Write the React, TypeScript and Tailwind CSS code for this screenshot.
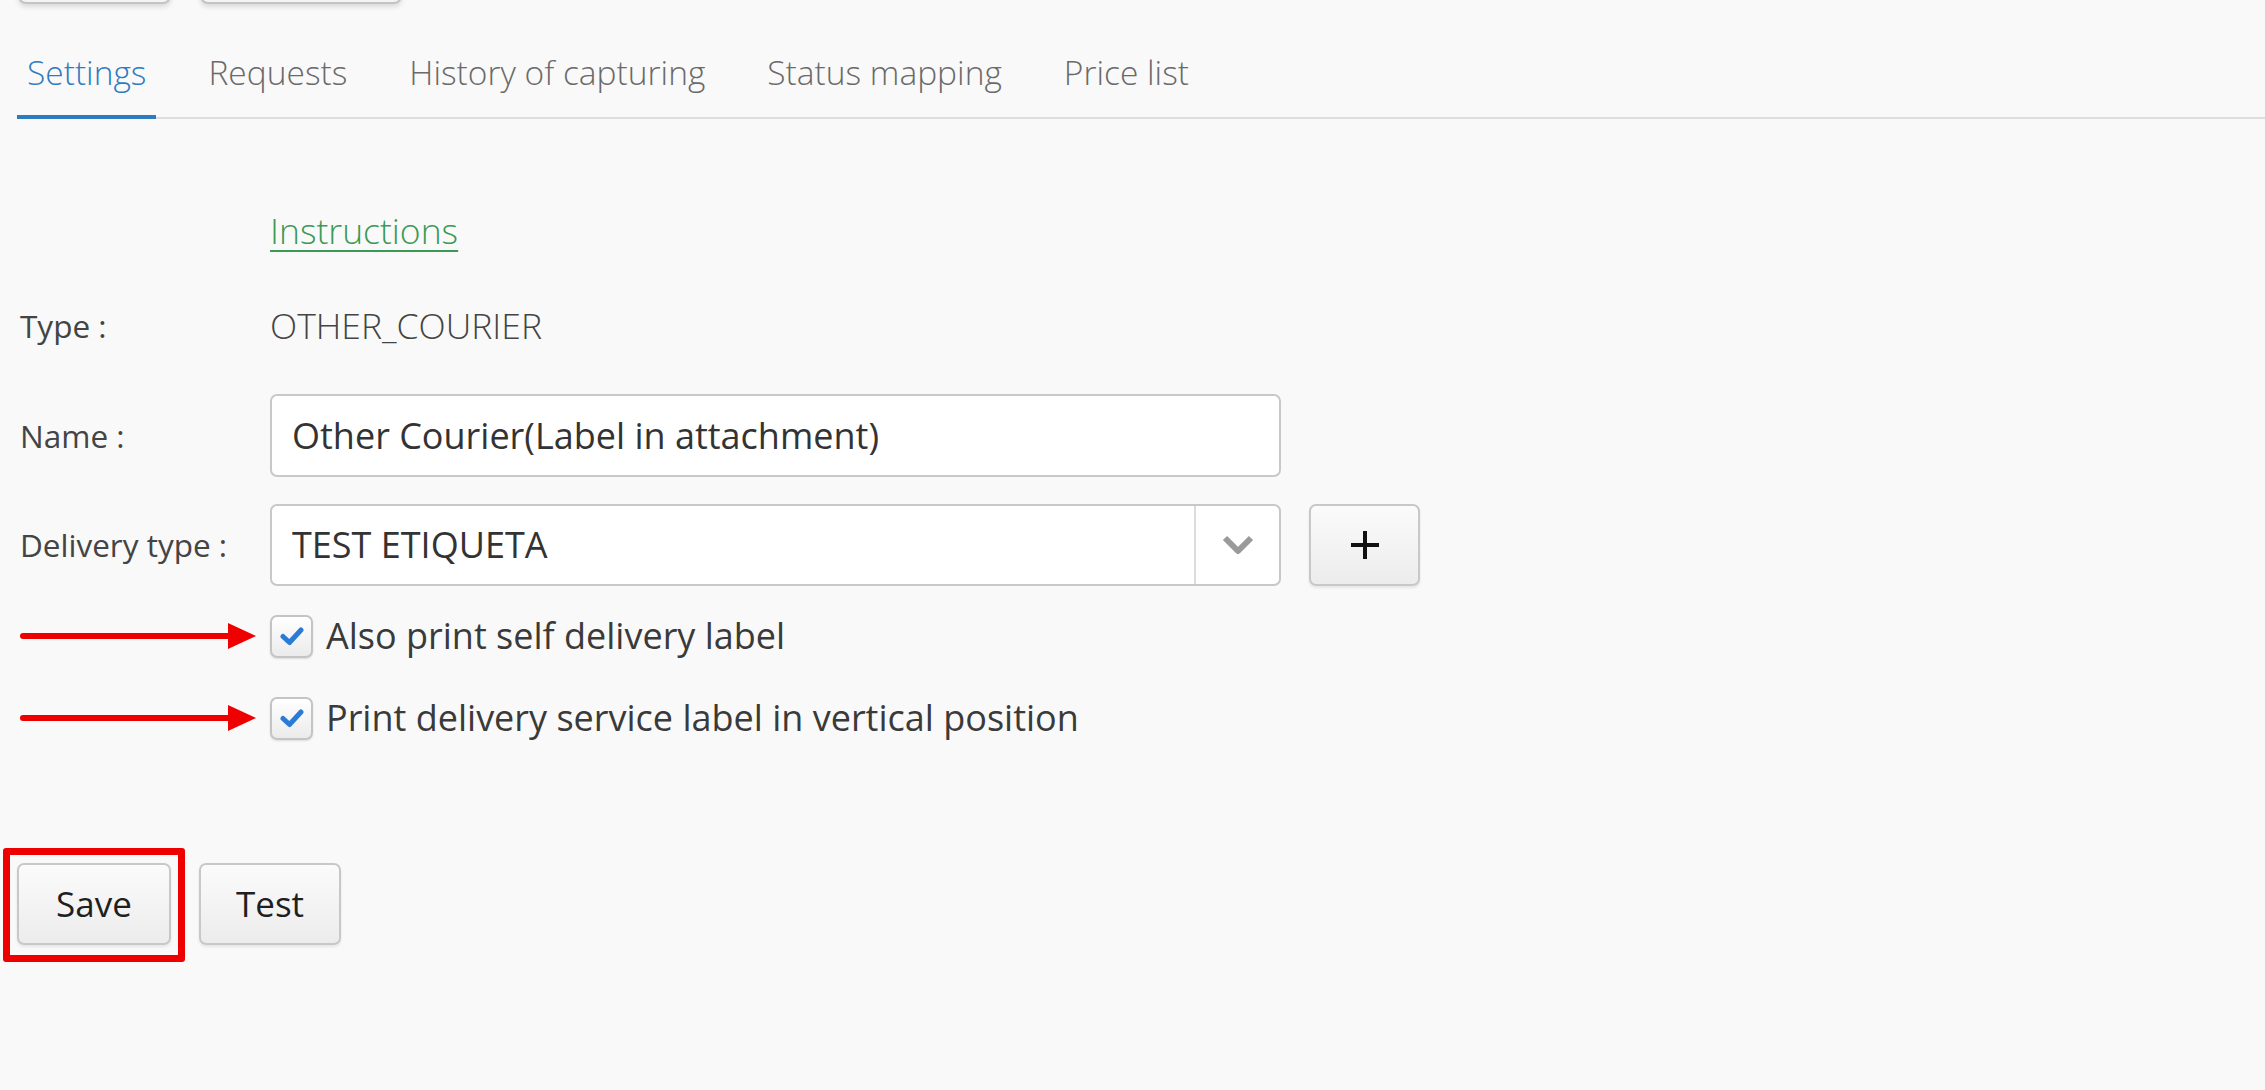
import React from "react";

const tabs = ["Settings", "Requests", "History of capturing", "Status mapping", "Price list"];

function Arrow() {
    // red pointer drawn into the label gutter
    return (
        <svg width="236" height="28" viewBox="0 0 236 28" className="block">
            <line x1="3" y1="14" x2="214" y2="14" stroke="#ee0000" strokeWidth="6" strokeLinecap="round" />
            <polygon points="208,1 236,14 208,27" fill="#ee0000" />
        </svg>
    );
}

function Checkbox() {
    return (
        <span className="flex h-[43px] w-[43px] shrink-0 items-center justify-center rounded-[7px] border-2 border-[#c4c4c4] bg-gradient-to-b from-white to-[#ebebeb] shadow-[0_1px_2px_rgba(0,0,0,0.12)]">
            <svg width="24" height="20" viewBox="0 0 24 20">
                <path d="M3 10.5 L9.5 16.5 L21 4" fill="none" stroke="#2a7bd6" strokeWidth="5" strokeLinecap="round" strokeLinejoin="round" />
            </svg>
        </span>
    );
}

function Button({ children, className = "" }: { children: React.ReactNode; className?: string }) {
    return (
        <button className={"flex h-[82px] items-center justify-center rounded-[7px] border-2 border-[#c8c8c8] bg-gradient-to-b from-[#fbfbfb] to-[#ececec] text-[35px] text-[#1f1f1f] shadow-[0_2px_3px_rgba(0,0,0,0.08)] " + className}>
            {children}
        </button>
    );
}

export default function App() {
    return (
        <div className="min-h-screen w-full overflow-hidden bg-[#f9f9f9] font-['Open_Sans',sans-serif] text-[#333]">
            {/* toolbar buttons scrolled mostly out of view */}
            <div className="-mt-[78px] flex gap-[29px] pl-[18px]">
                <div className="h-[82px] w-[153px] rounded-[8px] border-2 border-[#c4c4c4] bg-[#f4f4f4] shadow-[0_3px_5px_rgba(0,0,0,0.12)]" />
                <div className="h-[82px] w-[202px] rounded-[8px] border-2 border-[#c4c4c4] bg-[#f4f4f4] shadow-[0_3px_5px_rgba(0,0,0,0.12)]" />
            </div>

            {/* tabs */}
            <nav className="ml-[17px] mt-[46px] flex gap-[42px] border-b-2 border-[#dedede]">
                {tabs.map((t, i) => (
                    <div
                        key={t}
                        className={
                            i === 0
                                ? "-mb-[2px] border-b-4 border-[#2f7bbf] px-[10px] pb-[21px] text-[33.5px] font-light leading-[44px] text-[#2f7bbf]"
                                : "-mb-[2px] border-b-4 border-transparent px-[10px] pb-[21px] text-[33.5px] font-light leading-[44px] text-[#6a6a6a]"
                        }
                    >
                        {t}
                    </div>
                ))}
            </nav>

            {/* form */}
            <div className="pl-[20px]">
                <div className="mt-[88px] flex h-[48px] items-center">
                    <div className="w-[250px]" />
                    <a href="#" className="text-[35.5px] font-light text-[#3a9a55] underline decoration-2 underline-offset-[6px]">
                        Instructions
                    </a>
                </div>

                <div className="mt-[47px] flex h-[48px] items-center">
                    <div className="w-[250px] text-[31.5px] text-[#444]">Type :</div>
                    <div className="text-[35.5px] font-light text-[#444]">OTHER_COURIER</div>
                </div>

                <div className="mt-[44px] flex h-[83px] items-center">
                    <div className="w-[250px] text-[31.5px] text-[#444]">Name :</div>
                    <div className="flex h-full w-[1011px] items-center rounded-[7px] border-2 border-[#c8c8c8] bg-white px-[20px] text-[36px] text-[#333]">
                        Other Courier(Label in attachment)
                    </div>
                </div>

                <div className="mt-[27px] flex h-[82px] items-center">
                    <div className="w-[250px] text-[31.5px] text-[#444]">Delivery type :</div>
                    <div className="flex h-full w-[1011px] items-stretch rounded-[7px] border-2 border-[#c8c8c8] bg-white">
                        <div className="flex flex-1 items-center px-[20px] text-[36px] text-[#333]">TEST ETIQUETA</div>
                        <div className="flex w-[85px] items-center justify-center border-l-2 border-[#dcdcdc]">
                            <svg width="34" height="22" viewBox="0 0 34 22">
                                <path d="M4 4 L17 17 L30 4" fill="none" stroke="#9a9a9a" strokeWidth="6" strokeLinejoin="round" />
                            </svg>
                        </div>
                    </div>
                    <Button className="ml-[28px] w-[111px]">
                        <svg width="30" height="30" viewBox="0 0 30 30">
                            <path d="M15 1 V29 M1 15 H29" stroke="#111" strokeWidth="4" />
                        </svg>
                    </Button>
                </div>

                <div className="mt-[26px] flex h-[48px] items-center">
                    <div className="w-[250px]">
                        <Arrow />
                    </div>
                    <Checkbox />
                    <span className="ml-[13px] text-[36px] text-[#3a3a3a]">Also print self delivery label</span>
                </div>

                <div className="mt-[34px] flex h-[48px] items-center">
                    <div className="w-[250px]">
                        <Arrow />
                    </div>
                    <Checkbox />
                    <span className="ml-[13px] text-[36px] text-[#3a3a3a]">Print delivery service label in vertical position</span>
                </div>
            </div>

            {/* actions */}
            <div className="mt-[121px] flex gap-[28px] pl-[17px]">
                <div className="relative">
                    <Button className="w-[154px]">Save</Button>
                    <div className="pointer-events-none absolute -left-[14px] -right-[14px] -top-[15px] -bottom-[17px] rounded-[3px] border-[7px] border-[#ee0000]" />
                </div>
                <Button className="w-[142px]">Test</Button>
            </div>
        </div>
    );
}
